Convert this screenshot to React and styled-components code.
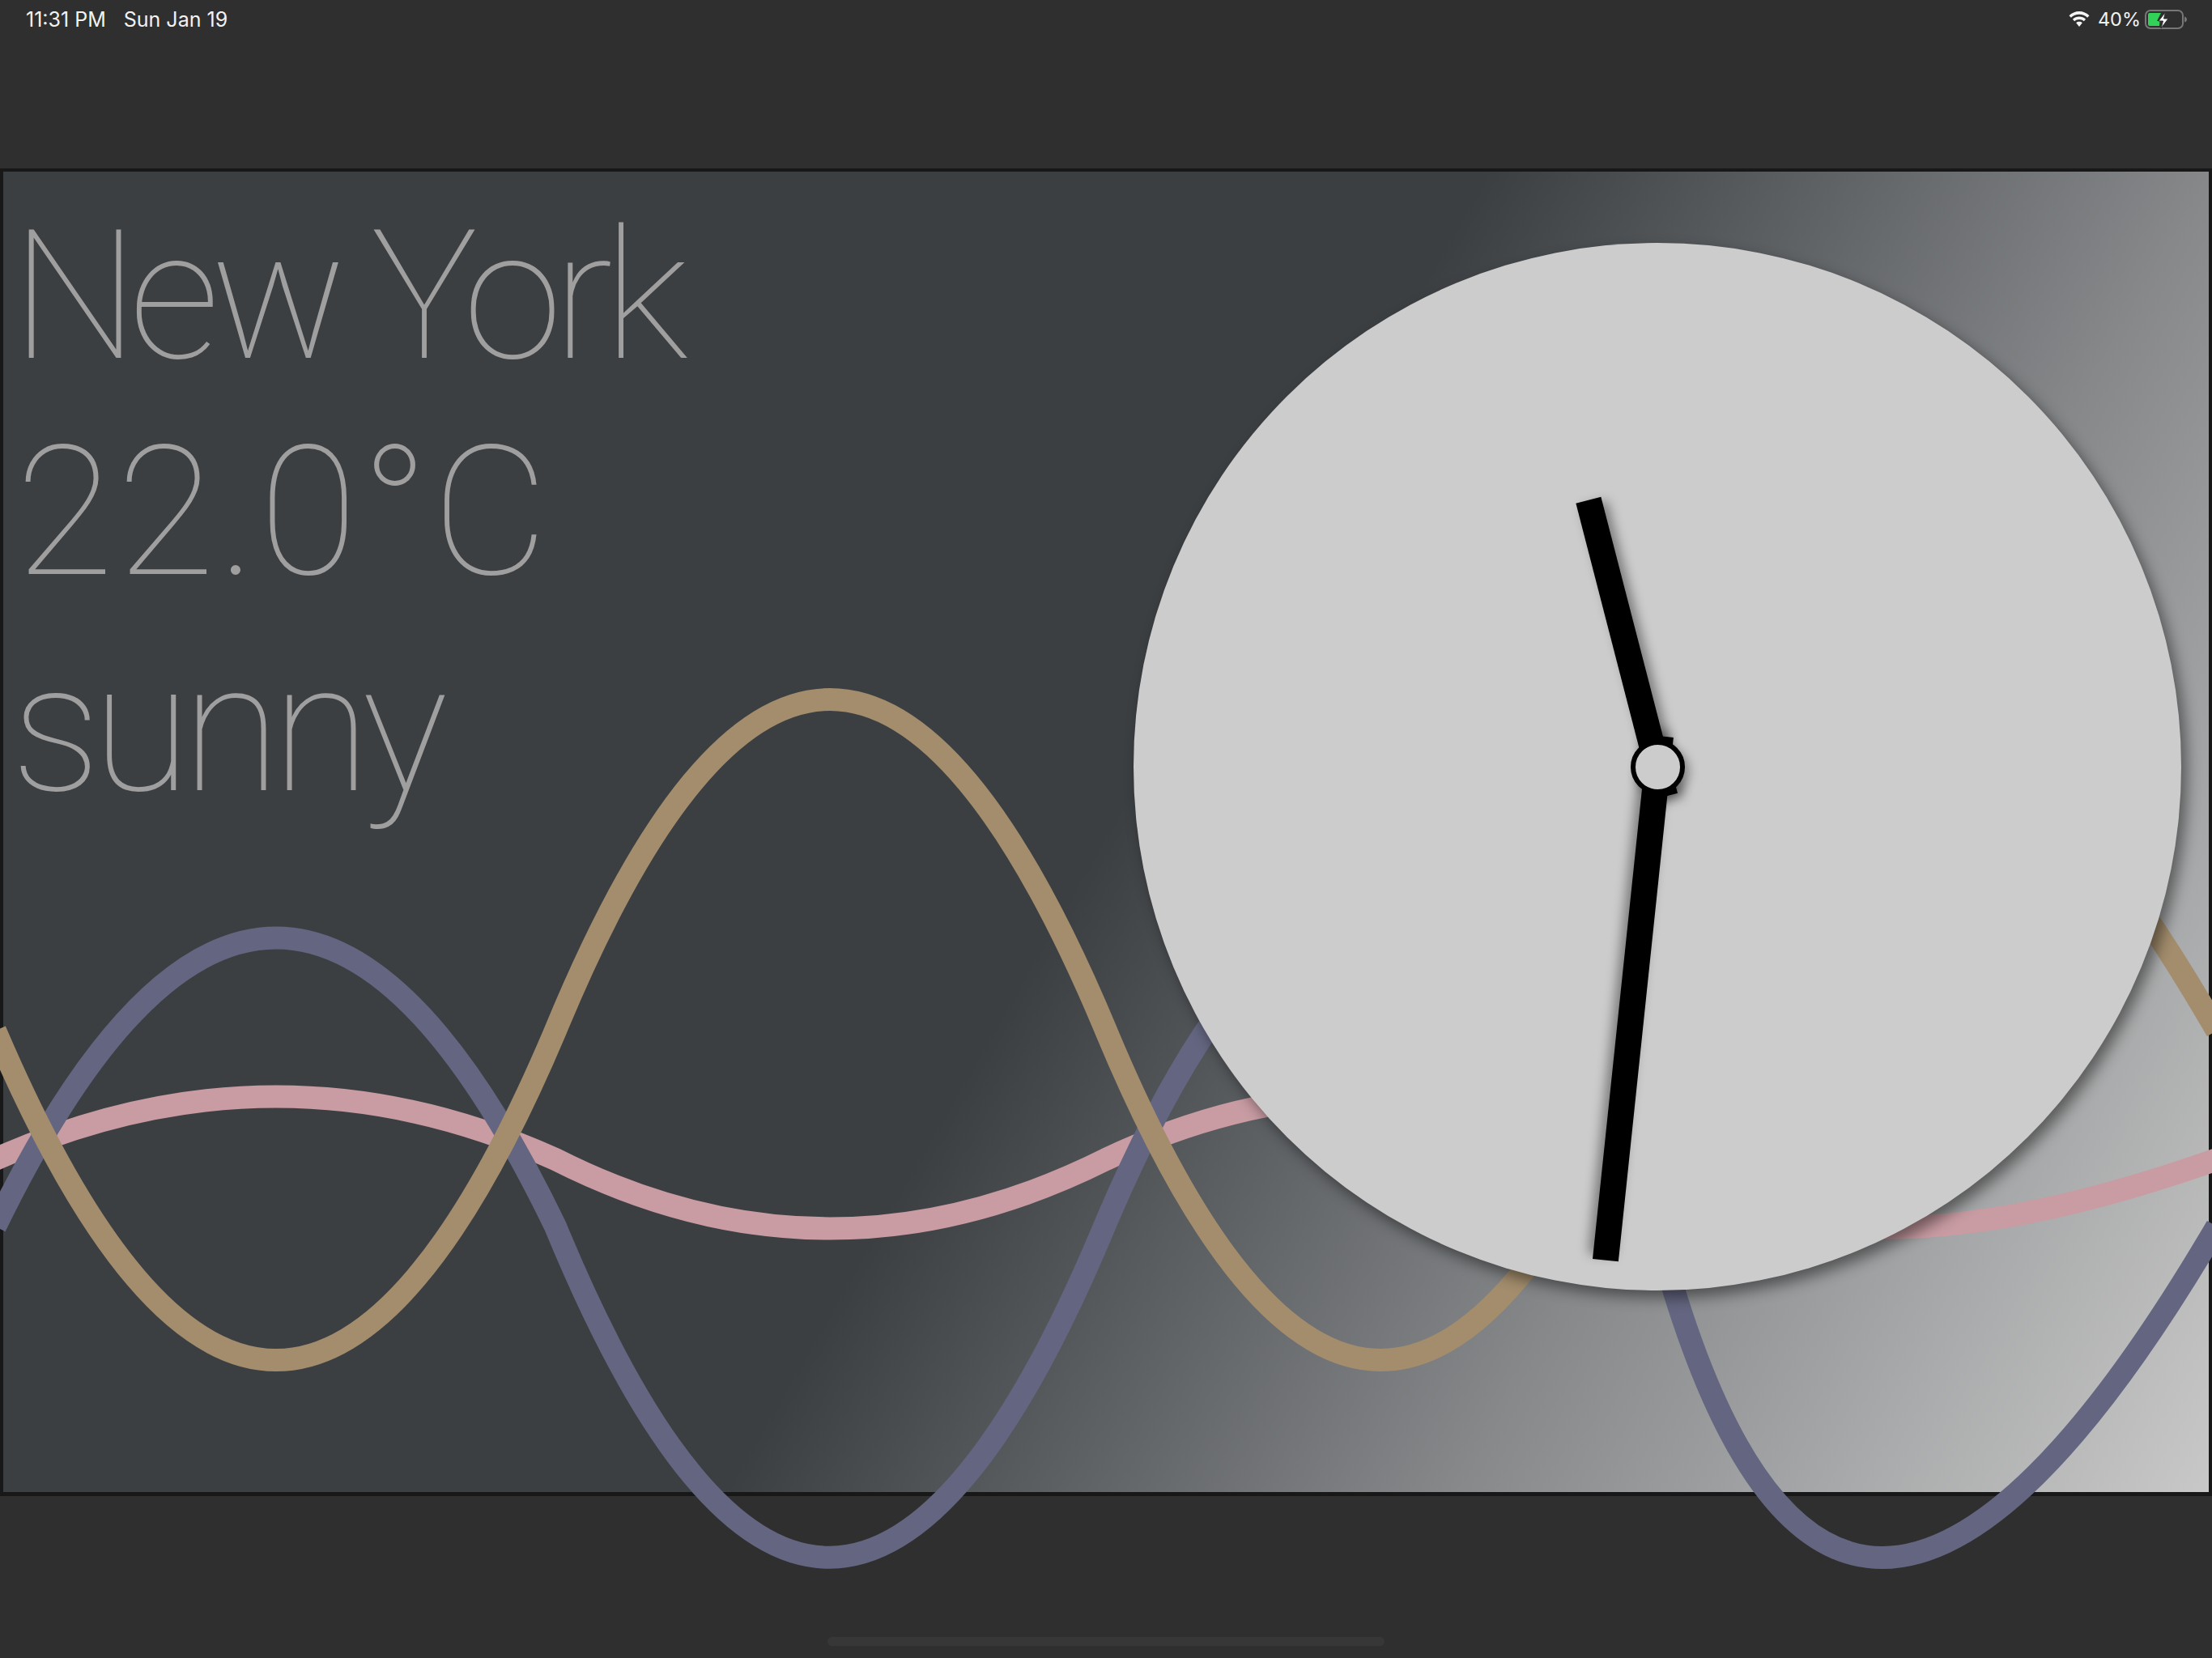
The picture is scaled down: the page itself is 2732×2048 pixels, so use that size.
import styled, { createGlobalStyle } from "styled-components";

const GlobalStyle = createGlobalStyle`
  html, body {
    margin: 0;
    padding: 0;
    background: #2f2f2f;
  }
`;

const Page = styled.div`
  width: 2732px;
  height: 2048px;
  display: flex;
  flex-direction: column;
  overflow: hidden;
  background-color: #2f2f2f;
  font-family: Inter, "Liberation Sans", sans-serif;
`;

const StatusBar = styled.div`
  height: 208px;
  box-sizing: border-box;
  padding: 10px 29px 0 32px;
  display: flex;
  justify-content: space-between;
  align-items: flex-start;
  color: #f2f2f2;
  font-size: 25px;
  line-height: 28px;
`;

const StatusGroup = styled.div`
  display: flex;
  align-items: center;
  gap: ${(p) => p.$gap}px;
`;

const Percent = styled.span`
  font-size: 23.5px;
  margin-left: 4px;
`;

const Card = styled.div`
  position: relative;
  height: 1640px;
  box-sizing: border-box;
  border: 4px solid #181818;
  border-bottom-width: 5px;
  display: flex;
  justify-content: space-between;
  align-items: flex-start;
  background: linear-gradient(120deg, #3c3f42 50%, #606366 62%, #86888a 74.5%, #c8c8c8 100%);
`;

const Weather = styled.div`
  padding: 21px 0 0 10px;
  display: flex;
  flex-direction: column;
  color: #9f9f9f;
  font-family: Roboto, Inter, sans-serif;
  font-weight: 100;
  font-size: 222px;
  line-height: 267px;
`;

const WeatherLine = styled.div`
  padding-left: ${(p) => p.$indent || 0}px;
  letter-spacing: ${(p) => p.$spacing}px;
  white-space: nowrap;
`;

const WaveLayer = styled.svg`
  position: absolute;
  left: -4px;
  top: -212px;
  width: 2732px;
  height: 2048px;
  overflow: visible;
  pointer-events: none;
`;

const Wave = styled.path`
  fill: none;
  stroke: ${(p) => p.$color};
  stroke-width: 28;
`;

const ClockFace = styled.div`
  position: relative;
  flex: none;
  width: 1294px;
  height: 1294px;
  margin: 88px 34px 0 0;
  border-radius: 50%;
  background-color: #cccccc;
  box-shadow: 7px 9px 18px rgba(0, 0, 0, 0.46);
`;

const Hand = styled.div`
  position: absolute;
  left: calc(50% - 16px);
  top: calc(50% - ${(p) => p.$length}px);
  width: 32px;
  height: ${(p) => p.$length + 38}px;
  background-color: #000;
  box-shadow: 6px 6px 14px rgba(0, 0, 0, 0.4);
  transform-origin: 16px ${(p) => p.$length}px;
  transform: rotate(${(p) => p.$angle}deg);
`;

const Pivot = styled.div`
  position: absolute;
  left: calc(50% - 33.5px);
  top: calc(50% - 33.5px);
  width: 67px;
  height: 67px;
  box-sizing: border-box;
  border: 6px solid #000;
  border-radius: 50%;
  background-color: #cccccc;
  box-shadow: 6px 6px 12px rgba(0, 0, 0, 0.3);
`;

const Footer = styled.div`
  flex: 1;
  display: flex;
  justify-content: center;
  align-items: flex-end;
  padding-bottom: 15px;
`;

const HomeBar = styled.div`
  width: 688px;
  height: 11px;
  border-radius: 6px;
  background-color: #373737;
`;

const Wifi = () => (
  <svg width="28" height="20" viewBox="0 0 28 20">
    <path
      d="M14 3.800c3.900 0 7.400 1.500 10.100 4l2.400-2.600C23.200 2 18.800 0 14 0S4.800 2 1.500 5.200l2.400 2.600C6.600 5.300 10.100 3.800 14 3.800z"
      fill="#f5f5f5"
    />
    <path
      d="M14 10c2.200 0 4.200.8 5.800 2.200l2.300-2.500C19.900 7.700 17.100 6.500 14 6.500s-5.900 1.200-8.100 3.200l2.300 2.500C9.800 10.800 11.800 10 14 10z"
      fill="#f5f5f5"
    />
    <path d="M14 12.800c-1.500 0-2.800.5-3.800 1.400L14 19l3.800-4.800c-1-.9-2.300-1.400-3.800-1.400z" fill="#f5f5f5" />
  </svg>
);

const Battery = () => (
  <svg width="54" height="24" viewBox="0 0 54 24">
    <rect x="1" y="1" width="46" height="22" rx="6" fill="none" stroke="#777" strokeWidth="2" />
    <path d="M4 6a2 2 0 0 1 2-2h14l-5 10h3.500L18 20H6a2 2 0 0 1-2-2z" fill="#32d158" />
    <path d="M49 8.500c2 .5 3 2 3 3.500s-1 3-3 3.500z" fill="#777" />
    <path d="M25.500 3 17 14h5.500L20 23l9-12h-5.500z" fill="#fff" stroke="#2f2f2f" strokeWidth="1" />
  </svg>
);

export default function App() {
  return (
    <Page>
      <GlobalStyle />
      <StatusBar>
        <StatusGroup $gap={22}>
          <span>11:31 PM</span>
          <span>Sun Jan 19</span>
        </StatusGroup>
        <StatusGroup $gap={5}>
          <Wifi />
          <Percent>40%</Percent>
          <Battery />
        </StatusGroup>
      </StatusBar>
      <Card>
        <Weather>
          <WeatherLine $spacing={-11.5}>New York</WeatherLine>
          <WeatherLine $spacing={3.5} $indent={5}>22.0°C</WeatherLine>
          <WeatherLine $spacing={-10.5}>sunny</WeatherLine>
        </Weather>
        <WaveLayer viewBox="0 0 2732 2048">
          <Wave
            $color="#c99ca3"
            d="M-6 1432 Q342 1277 686 1432 Q1024 1603 1366 1432 Q1705 1272 2045 1432 Q2258 1602 2738 1432"
          />
          <Wave
            $color="#646681"
            d="M-6 1515 Q342 802 686 1515 Q1024 2335 1366 1510 Q1705 715 2045 1515 Q2258 2333 2738 1515"
          />
          <Wave
            $color="#a38d6d"
            d="M-6 1273 Q342 2087 686 1273 Q1024 455 1366 1273 Q1705 2087 2045 1273 Q2258 445 2738 1273"
          />
        </WaveLayer>
        <ClockFace>
          <Hand $length={340} $angle={-14.5} />
          <Hand $length={613} $angle={186} />
          <Pivot />
        </ClockFace>
      </Card>
      <Footer>
        <HomeBar />
      </Footer>
    </Page>
  );
}
